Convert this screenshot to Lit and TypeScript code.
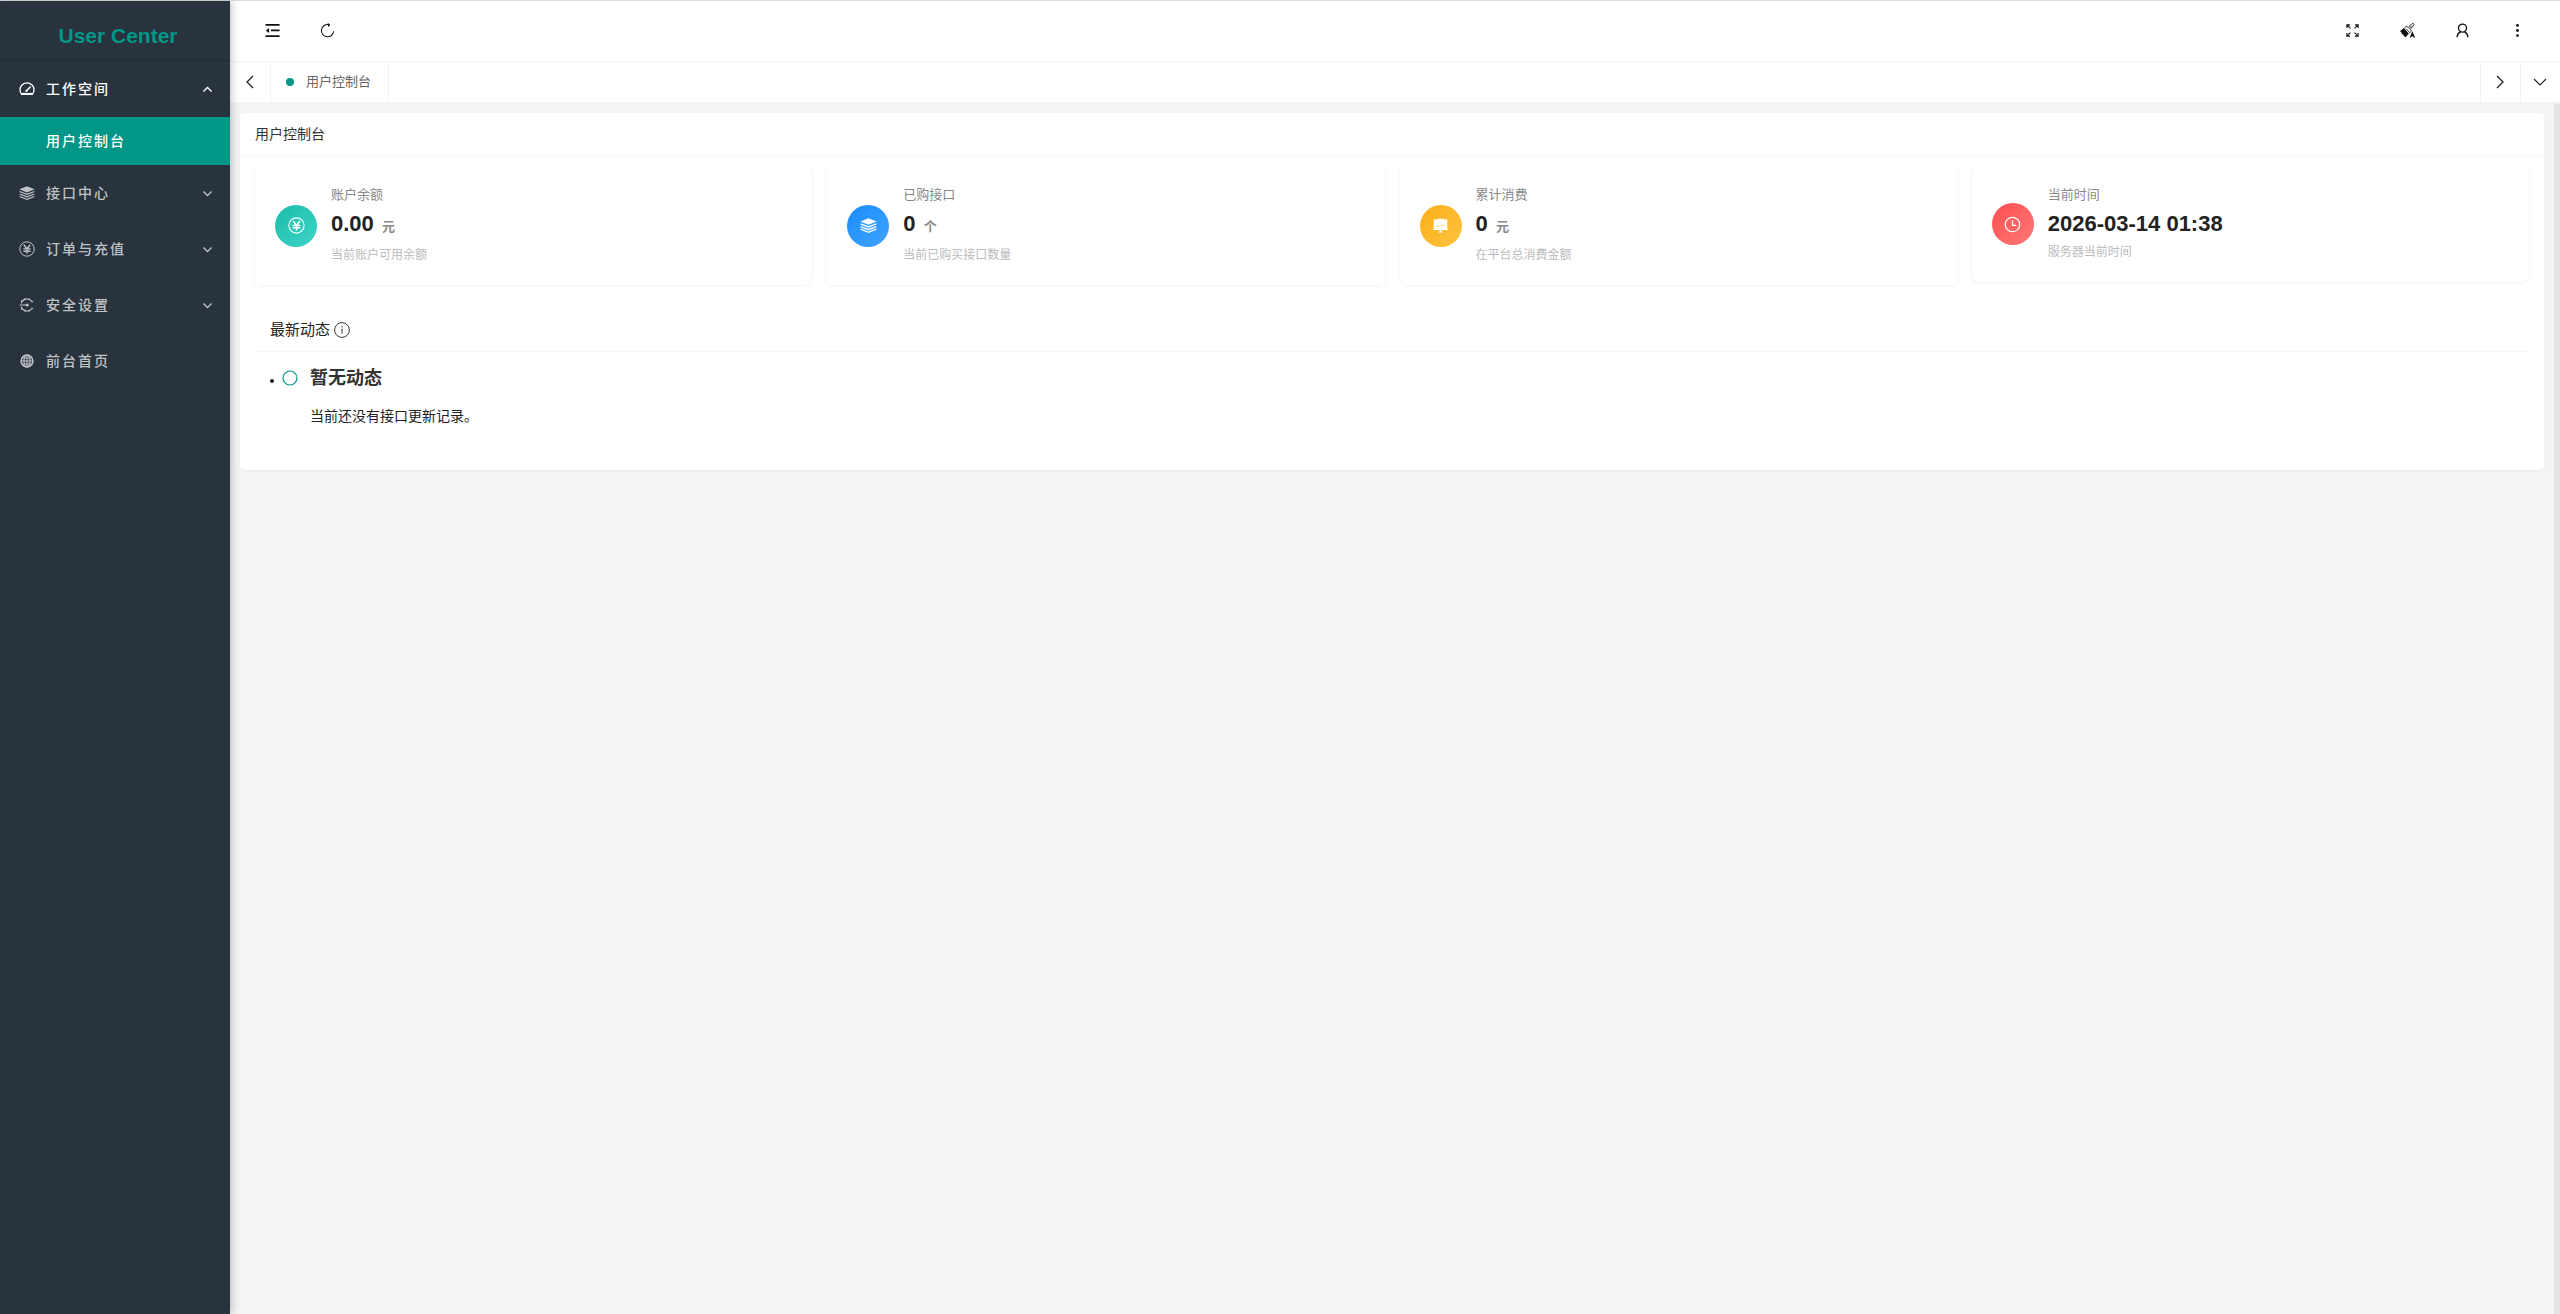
import { LitElement, html, css, svg } from "lit";
import { customElement } from "lit/decorators.js";

const shapes: Record<string, any> = {
  gauge: svg`<path d="M2.6 13.4A7 7 0 1 1 13.4 13.4Z" fill="none" stroke="currentColor" stroke-width="1.3" stroke-linejoin="round"/><path d="M3 12.6H13" stroke="currentColor" stroke-width="1.4"/><path d="M7.4 10 11.2 6" fill="none" stroke="currentColor" stroke-width="1.5" stroke-linecap="round"/><circle cx="7.4" cy="9.8" r="1.1" fill="currentColor"/>`,
  layers: svg`<path d="M8 1.2 15.6 4.2 8 7.4.4 4.2Z" fill="currentColor"/><path d="M.6 6.5 8 9.4 15.4 6.5M.6 9 8 11.9 15.4 9M.6 11.5 8 14.4 15.4 11.5" fill="none" stroke="currentColor" stroke-width="1.3"/>`,
  yen: svg`<circle cx="8" cy="8" r="7.2" fill="none" stroke="currentColor"/><path d="M4.8 3.8 8 7.8 11.2 3.8M8 7.8V12.6M4.4 7.9H11.6M4.4 10.2H11.6" fill="none" stroke="currentColor" stroke-width="1.4"/>`,
  gear: svg`<path d="M12.6 4.2A6 6 0 0 0 2.2 6.4M2.2 9.6A6 6 0 0 0 12.6 11.8" fill="none" stroke="currentColor" stroke-width="1.2"/><path d="M.6 8H8M6 1.2V2.4M10 1.2V2.4M6 13.6V14.8M10 13.6V14.8M2.2 3.6 3.4 4.4M2.2 12.4 3.4 11.6M12.2 5 14.2 4.2M12.2 11 14.2 11.8" fill="none" stroke="currentColor" stroke-width="1.2"/><circle cx="8.2" cy="8" r="1.6" fill="currentColor"/>`,
  globe: svg`<circle cx="8" cy="8" r="5.9" fill="none" stroke="currentColor" stroke-width="1.5"/><ellipse cx="8" cy="8" rx="3" ry="5.8" stroke="currentColor" stroke-width="1.2" fill="none"/><path d="M2 8H14M8 2V14M3 5H13M3 11H13" stroke="currentColor" stroke-width="1.1" fill="none"/>`,
  up: svg`<path d="M3 10.5 8 5.5 13 10.5" fill="none" stroke="currentColor" stroke-width="1.6"/>`,
  down: svg`<path d="M3 5.5 8 10.5 13 5.5" fill="none" stroke="currentColor" stroke-width="1.6"/>`,
  fold: svg`<path d="M.5 1.9H15.5M6.4 7.9H15.5M.5 13.9H15.5" fill="none" stroke="currentColor" stroke-width="1.9"/><path d="M.8 7.9 4.4 5.2V10.6Z" fill="currentColor"/>`,
  refresh: svg`<path d="M9.6 1.9A6.5 6.5 0 1 0 14.5 8.8" fill="none" stroke="currentColor" stroke-width="1.1"/><path d="M8.2-.2 11 2 8.6 4.2Z" fill="currentColor"/>`,
  full: svg`<path d="M2 5.4V2H5.4M2.2 2.2 5.8 5.8M10.6 2H14V5.4M13.8 2.2 10.2 5.8M2 10.6V14H5.4M2.2 13.8 5.8 10.2M10.6 14H14V10.6M13.8 13.8 10.2 10.2" fill="none" stroke="currentColor" stroke-width="1.1"/>`,
  brush: svg`<path d="M0 8.8 4 5.4 9.4 11.2 6 15.2 4.6 14 3.8 13.4 3.2 12 1.8 11.6 1.6 10.2Z" fill="currentColor"/><path d="M4.8 5 6.6 3.4 8.8 4.8 12.6.8Q13.6-.1 14.6.8 15.4 1.8 14.4 2.8L11 6.6 12.2 8.6 10 10.6M6 5.8 10.4 10.2M12.8 2.6 9.4 6.2" fill="none" stroke="currentColor" stroke-width=".9"/><path d="M11 15.4 13.2 10.6 15.4 15.4M11.8 13.6H14.6" fill="none" stroke="currentColor" stroke-width="1.4"/>`,
  user: svg`<circle cx="8" cy="5.4" r="4.3" fill="none" stroke="currentColor" stroke-width="1.4"/><path d="M2.2 15.2Q2.6 10.8 6 9.2M13.8 15.2Q13.4 10.8 10 9.2" fill="none" stroke="currentColor" stroke-width="1.4"/>`,
  dots: svg`<circle cx="8" cy="2.6" r="1.5" fill="currentColor"/><circle cx="8" cy="8" r="1.5" fill="currentColor"/><circle cx="8" cy="13.4" r="1.5" fill="currentColor"/>`,
  left: svg`<path d="M11 2 5 8 11 14" fill="none" stroke="currentColor" stroke-width="1.3"/>`,
  right: svg`<path d="M5 2 11 8 5 14" fill="none" stroke="currentColor" stroke-width="1.3"/>`,
  wide: svg`<path d="M2 5 8 11 14 5" fill="none" stroke="currentColor" stroke-width="1.2"/>`,
  board: svg`<path d="M1.6 2.4H5V1.6H11V2.4H14.4V11.2H15V12.2H8.8V13.6H10V14.6H6V13.6H7.2V12.2H1V11.2H1.6Z" fill="currentColor"/><path d="M4.4 8.4 6.2 9.4 8.4 7.2 9.6 8.4 11.8 6.4" fill="none" stroke="#fdb924" stroke-width=".6"/>`,
  clock: svg`<circle cx="8" cy="8" r="6.8" fill="none" stroke="currentColor" stroke-width="1.2"/><path d="M8 4V8.8H11.6" fill="none" stroke="currentColor" stroke-width="1.2"/>`,
  info: svg`<circle cx="8" cy="8" r="7.4" fill="none" stroke="currentColor" stroke-width=".9"/><path d="M8 6.6V11.8" stroke="currentColor" stroke-width=".9"/><circle cx="8" cy="4.8" r=".7" fill="currentColor"/>`,
  ring: svg`<circle cx="8" cy="8" r="7" fill="none" stroke="currentColor" stroke-width="1.2"/>`,
};
const icon = (name: string) =>
  html`<svg class="icon" viewBox="0 0 16 16" aria-hidden="true">${shapes[name]}</svg>`;

const menu = [
  { icon: "layers", text: "接口中心", more: true },
  { icon: "yen", text: "订单与充值", more: true },
  { icon: "gear", text: "安全设置", more: true },
  { icon: "globe", text: "前台首页", more: false },
];
const stats = [
  { icon: "yen", tone: "green", label: "账户余额", value: "0.00", unit: "元", note: "当前账户可用余额" },
  { icon: "layers", tone: "blue", label: "已购接口", value: "0", unit: "个", note: "当前已购买接口数量" },
  { icon: "board", tone: "amber", label: "累计消费", value: "0", unit: "元", note: "在平台总消费金额" },
  { icon: "clock", tone: "red", label: "当前时间", value: "2026-03-14 01:38", unit: "", note: "服务器当前时间" },
];

@customElement("app-root")
export class AppRoot extends LitElement {
  static styles = css`
    :host { display: block; font: 14px/24px "Liberation Sans", "Noto Sans CJK SC", sans-serif; color: #333; }
    * { box-sizing: border-box; }
    button { font: inherit; color: inherit; background: none; border: 0; padding: 0; cursor: pointer; }
    a { color: inherit; text-decoration: none; }
    h1, h2, h3, p, ul { margin: 0; padding: 0; }
    .icon { display: block; width: 16px; height: 16px; flex: none; overflow: visible; }
    .page { display: flex; min-height: 100vh; border-top: 1px solid #dfdfdf; background: #f4f4f4; }
    .side { width: 230px; flex: none; background: #28333e; color: #bfc2c5; box-shadow: 1px 0 8px rgba(29, 35, 41, .3); z-index: 1; }
    .logo { height: 60px; padding: 11px 0 0 6px; border-bottom: 1px solid #212a33; color: #009688; font-size: 21px; line-height: 48px; text-align: center; font-weight: 700; }
    .item { display: flex; align-items: center; width: 100%; height: 56px; padding: 0 16px 0 19px; gap: 11px; letter-spacing: 2px; font-weight: 500; text-align: left; }
    .item .text { flex: 1; }
    .item > .icon:last-child { width: 13px; height: 13px; }
    .open { color: #fff; }
    .sub { display: flex; align-items: center; height: 48px; padding-left: 46px; background: #009688; color: #fff; letter-spacing: 2px; font-weight: 500; }
    .main { flex: 1; min-width: 0; display: flex; flex-direction: column; }
    .bar { display: flex; justify-content: space-between; height: 61px; padding: 0 15px 2px; background: #fff; color: #111; border-bottom: 1px solid #f2f2f2; }
    .group { display: flex; }
    .group button { display: flex; align-items: center; justify-content: center; width: 55px; }
    .group .icon { width: 15px; height: 15px; }
    .tabs { display: flex; height: 40px; background: #fff; }
    .arrow { display: flex; align-items: center; justify-content: center; width: 40px; padding-right: 2px; border-left: 1px solid #f2f2f2; color: #222; }
    .arrow.first { border-left: 0; border-right: 1px solid #f2f2f2; width: 41px; padding: 0; }
    .tab { display: flex; align-items: center; gap: 12px; padding: 0 17px 0 15px; border-right: 1px solid #f2f2f2; color: #666; margin-right: auto; }
    .tab::before { content: ""; width: 8px; height: 8px; border-radius: 50%; background: #009688; }
    .tab span { font-size: 13px; }
    .body { flex: 1; display: flex; justify-content: space-between; align-items: stretch; }
    .content { flex: 1; padding: 11px 10px; }
    .track { width: 6px; margin-top: 1px; border-radius: 3px 3px 0 0; background: #e3e3e3; }
    .panel { background: #fff; border-radius: 4px; box-shadow: 0 1px 2px rgba(0, 0, 0, .05); padding-bottom: 43px; }
    .title { height: 43px; padding: 0 15px; border-bottom: 1px solid #f6f6f6; font-size: 14px; line-height: 42px; font-weight: 400; }
    .stats { display: grid; grid-template-columns: repeat(4, 1fr); gap: 15px; padding: 10px 15px 0; align-items: start; }
    .stat { display: flex; align-items: center; gap: 14px; padding: 16px 20px 18px; border-radius: 8px; box-shadow: 0 1px 4px rgba(0, 0, 0, .06); }
    .disc { display: flex; align-items: center; justify-content: center; width: 42px; height: 42px; margin-top: 2px; border-radius: 50%; color: #fff; }
    .disc .icon { width: 17px; height: 17px; }
    .green { background: linear-gradient(135deg, #1abcac, #3fd4c6); }
    .blue { background: linear-gradient(135deg, #1a8cff, #40a4ff); }
    .amber { background: linear-gradient(135deg, #faae18, #ffc341); }
    .red { background: linear-gradient(135deg, #ff4d50, #ff7976); }
    .label { color: #888; font-size: 13px; line-height: 24px; margin-top: 1px; }
    .value { color: #222; font-size: 22px; line-height: 32px; font-weight: 700; margin-top: 1px; }
    .unit { color: #888; font-size: 13px; font-weight: 700; margin-left: 2px; }
    .note { color: #bbb; font-size: 12px; line-height: 24px; }
    .news { margin-top: 24px; padding: 0 15px; }
    .newshead { display: flex; align-items: center; gap: 4px; height: 43px; padding: 0 15px; border-bottom: 1px solid #f6f6f6; color: #222; font-size: 15px; font-weight: 400; }
    .feed { list-style: none; padding: 14px 15px 0; }
    .entry { display: flex; gap: 8px; }
    .entry::before { content: ""; width: 4px; height: 4px; margin-top: 13px; border-radius: 50%; background: #222; flex: none; }
    .mark { color: #009688; margin-top: 4px; }
    .entry h3 { font-size: 18px; line-height: 24px; font-weight: 700; margin: 0 0 15px 4px; }
    .entry p { margin-left: 4px; line-height: 22px; color: #222; }
  `;

  render() {
    return html`
      <div class="page">
        <nav class="side">
          <h1 class="logo">User Center</h1>
          <button class="item open" aria-expanded="true">${icon("gauge")}<span class="text">工作空间</span>${icon("up")}</button>
          <a class="sub" href="#console">用户控制台</a>
          ${menu.map((m) =>
            m.more
              ? html`<button class="item">${icon(m.icon)}<span class="text">${m.text}</span>${icon("down")}</button>`
              : html`<a class="item" href="#home">${icon(m.icon)}<span class="text">${m.text}</span></a>`
          )}
        </nav>
        <div class="main">
          <header class="bar">
            <div class="group">
              <button aria-label="侧边伸缩">${icon("fold")}</button>
              <button aria-label="刷新">${icon("refresh")}</button>
            </div>
            <div class="group">
              <button aria-label="全屏">${icon("full")}</button>
              <button aria-label="主题">${icon("brush")}</button>
              <button aria-label="用户">${icon("user")}</button>
              <button aria-label="更多">${icon("dots")}</button>
            </div>
          </header>
          <div class="tabs">
            <button class="arrow first" aria-label="向左">${icon("left")}</button>
            <a class="tab" href="#console"><span>用户控制台</span></a>
            <button class="arrow" aria-label="向右">${icon("right")}</button>
            <button class="arrow" aria-label="标签操作">${icon("wide")}</button>
          </div>
          <div class="body">
            <main class="content">
              <section class="panel">
                <h2 class="title">用户控制台</h2>
                <div class="stats">
                  ${stats.map((s) => html`
                    <article class="stat">
                      <div class="disc ${s.tone}">${icon(s.icon)}</div>
                      <div>
                        <p class="label">${s.label}</p>
                        <p class="value">${s.value} ${s.unit ? html`<span class="unit">${s.unit}</span>` : ""}</p>
                        <p class="note">${s.note}</p>
                      </div>
                    </article>`)}
                </div>
                <section class="news">
                  <h2 class="newshead">最新动态 ${icon("info")}</h2>
                  <ul class="feed">
                    <li class="entry">
                      <span class="mark">${icon("ring")}</span>
                      <div><h3>暂无动态</h3><p>当前还没有接口更新记录。</p></div>
                    </li>
                  </ul>
                </section>
              </section>
            </main>
            <div class="track"></div>
          </div>
        </div>
      </div>`;
  }
}
